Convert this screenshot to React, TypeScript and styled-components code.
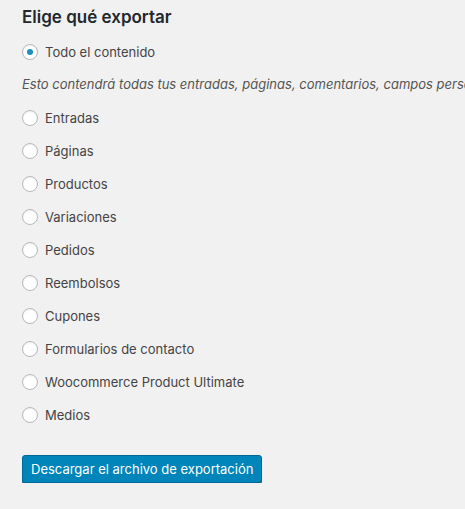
import React from "react";
import styled, { createGlobalStyle } from "styled-components";

const Global = createGlobalStyle`
  html, body { margin: 0; padding: 0; background: #f1f1f1; overflow: hidden; }
  body { font-family: Inter, "Liberation Sans", Arial, sans-serif; color: #444; }
`;

const Page = styled.div`
  padding: 6px 0 0 22px;
  overflow: hidden;
`;

const Title = styled.h2`
  margin: 0 0 7px;
  font-size: 17px;
  font-weight: 600;
  color: #23282d;
  line-height: 22px;
`;

const Row = styled.label`
  display: flex;
  align-items: center;
  gap: 7px;
  height: 33px;
  font-size: 13px;
  color: #444;
`;

const Radio = styled.span<{ $checked?: boolean }>`
  width: 16px;
  height: 16px;
  box-sizing: border-box;
  border-radius: 50%;
  border: 1px solid #b4b9be;
  background: #fff;
  box-shadow: inset 0 1px 2px rgba(0, 0, 0, 0.07);
  display: flex;
  align-items: center;
  justify-content: center;
  flex: none;
  &::after {
    content: "";
    display: ${(p) => (p.$checked ? "block" : "none")};
    width: 6px;
    height: 6px;
    border-radius: 50%;
    background: #1e8cbe;
  }
`;

const Desc = styled.p`
  margin: 0;
  height: 33px;
  line-height: 33px;
  font-style: italic;
  font-size: 13px;
  color: #555;
  white-space: nowrap;
`;

const Button = styled.button`
  display: block;
  margin-top: 24px;
  height: 28px;
  padding: 0 8px;
  font-family: inherit;
  font-size: 13px;
  line-height: 26px;
  white-space: nowrap;
  color: #fff;
  background: #0085ba;
  border: 1px solid #006799;
  border-radius: 3px;
  box-shadow: 0 1px 0 #006799;
`;

const items = [
  "Entradas",
  "Páginas",
  "Productos",
  "Variaciones",
  "Pedidos",
  "Reembolsos",
  "Cupones",
  "Formularios de contacto",
  "Woocommerce Product Ultimate",
  "Medios",
];

export default function App() {
  return (
    <>
      <Global />
      <Page>
        <Title>Elige qué exportar</Title>
        <Row>
          <Radio $checked />
          Todo el contenido
        </Row>
        <Desc>
          Esto contendrá todas tus entradas, páginas, comentarios, campos personalizados, términos, menús de navegación y entradas personalizadas.
        </Desc>
        {items.map((t) => (
          <Row key={t}>
            <Radio />
            {t}
          </Row>
        ))}
        <Button>Descargar el archivo de exportación</Button>
      </Page>
    </>
  );
}
